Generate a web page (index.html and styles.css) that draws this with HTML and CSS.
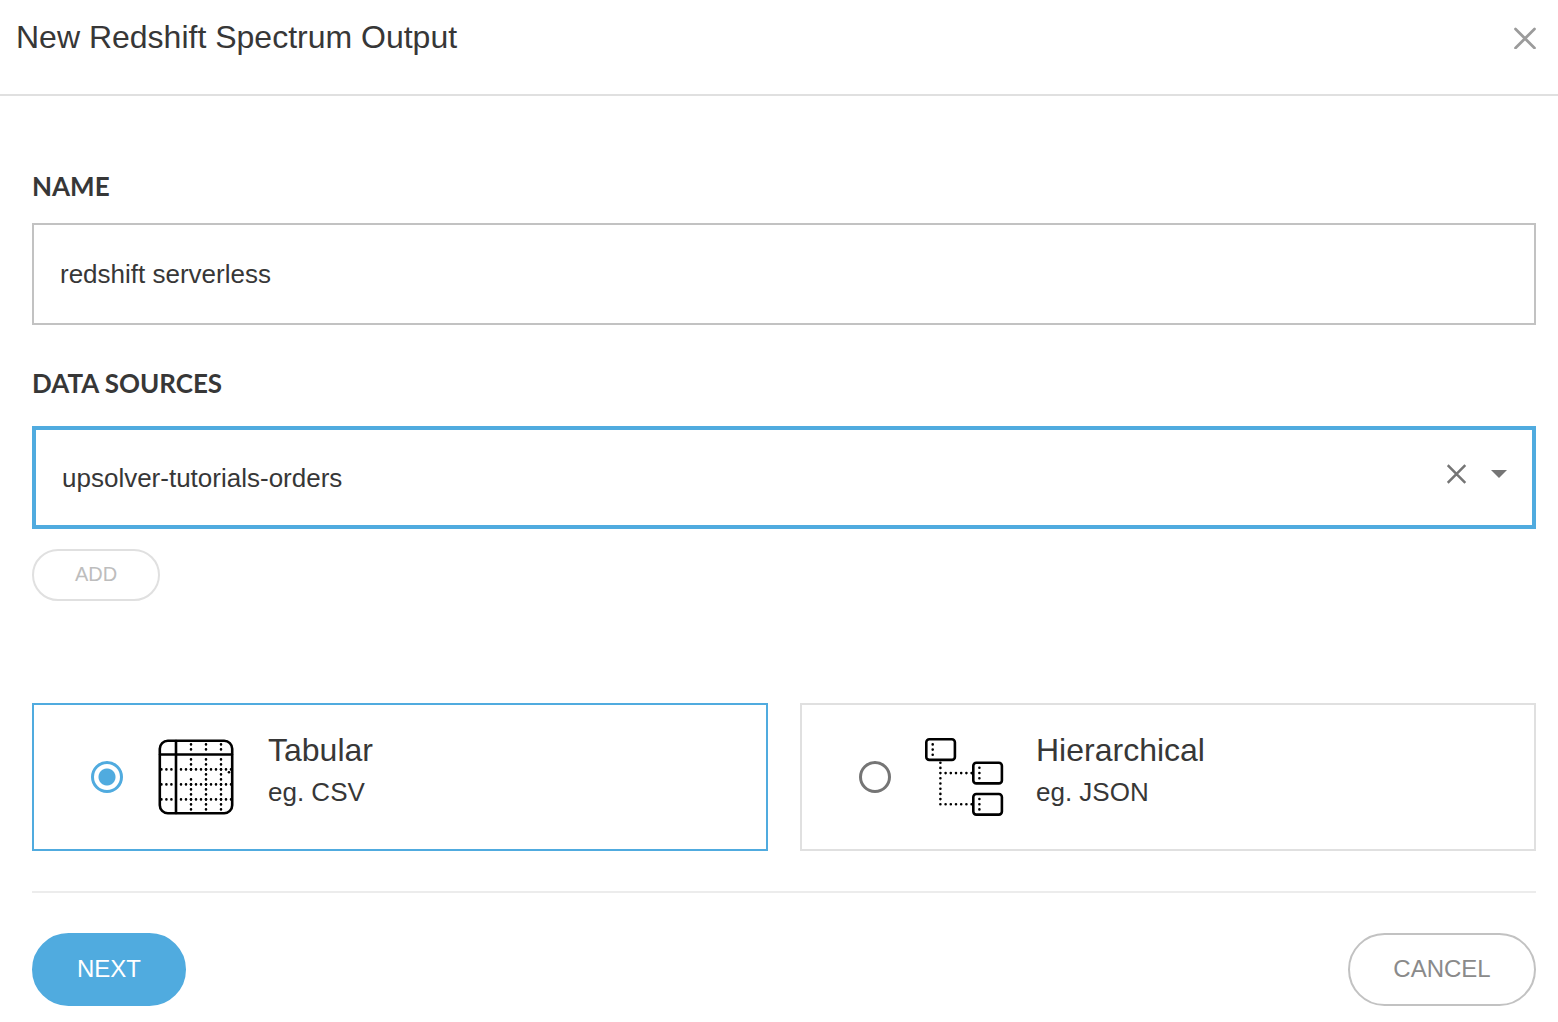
FILE: index.html
```
<!DOCTYPE html>
<html lang="en">

<head>
    <meta charset="utf-8">
    <title>New Redshift Spectrum Output</title>
    <link rel="stylesheet" href="styles.css">
</head>

<body>
    <header class="dialog-header">
        <h1>New Redshift Spectrum Output</h1>
        <button type="button" class="icon-btn" aria-label="Close">
            <svg width="22" height="24" viewBox="0 0 22 24" fill="none" stroke="#9b9b9b" stroke-width="2.7" stroke-linecap="round">
                <path d="M1.5 4l19 19M20.5 4l-19 19" />
            </svg>
        </button>
    </header>

    <form class="dialog-body">
        <label class="field-label" for="name">NAME</label>
        <input class="text-input" type="text" id="name" name="name" value="redshift serverless">

        <label class="field-label source-label" for="source">DATA SOURCES</label>
        <div class="select-box">
            <select id="source" name="source">
                <option>upsolver-tutorials-orders</option>
            </select>
            <div class="select-icons">
                <button type="button" class="icon-btn" aria-label="Clear">
                    <svg width="20" height="20" viewBox="0 0 20 20" fill="none" stroke="#757575" stroke-width="2.5">
                        <path d="M.7 1.2l17.6 17.6M18.3 1.2L.7 18.8" />
                    </svg>
                </button>
                <svg width="16" height="8" viewBox="0 0 16 8">
                    <path d="M0 0h16l-8 8z" fill="#757575" />
                </svg>
            </div>
        </div>
        <button type="button" class="btn btn-add" disabled>ADD</button>

        <div class="cards">
            <label class="card">
                <input type="radio" name="format" value="tabular" checked>
                <svg class="card-icon" width="80" height="80" viewBox="0 0 80 80" fill="none" stroke="#000" stroke-width="2.6" stroke-linecap="round">
                    <rect x="3.8" y="3.8" width="72.4" height="72.4" rx="8" />
                    <path d="M20 4v72M4 17.5h72" />
                    <!-- dotted cells -->
                    <g stroke-dasharray="0 5">
                        <path d="M35 7.4v5.1M50 7.4v5.1M65 7.4v5.1" />
                        <path d="M35 22.4v10.1M35 42.4v30.1M50 22.4v50.1M65 22.4v50.1" />
                        <path d="M5.4 32.4h10.1M5.4 47.4h10.1M5.4 62.4h10.1" />
                        <path d="M25 32.4h50.1M25 47.4h50.1M25 62.4h50.1" />
                        <path d="M73 35.2h.1" />
                    </g>
                </svg>
                <span class="card-text">
                    <span class="card-title">Tabular</span>
                    <span class="card-hint">eg. CSV</span>
                </span>
            </label>

            <label class="card">
                <input type="radio" name="format" value="hierarchical">
                <svg class="card-icon" width="80" height="80" viewBox="0 0 80 80" fill="none" stroke="#000" stroke-width="2.6" stroke-linecap="round">
                    <rect x="2.3" y="2.3" width="28.6" height="20.6" rx="3" />
                    <rect x="49.3" y="25.8" width="28.6" height="20.6" rx="3" />
                    <rect x="49.3" y="57" width="28.6" height="20.6" rx="3" />
                    <!-- connectors -->
                    <g stroke-dasharray="0 5.2">
                        <path d="M8.7 7.4v10.5M55.4 30.8v10.5M55.4 62v10.5" />
                        <path d="M16.4 25.7v41.7M16.4 36.1h31.3M16.4 67.3h31.3" />
                    </g>
                </svg>
                <span class="card-text">
                    <span class="card-title">Hierarchical</span>
                    <span class="card-hint">eg. JSON</span>
                </span>
            </label>
        </div>

        <footer class="dialog-footer">
            <button type="submit" class="btn btn-next">NEXT</button>
            <button type="button" class="btn btn-cancel">CANCEL</button>
        </footer>
    </form>
</body>

</html>
```
FILE: styles.css
```
* {
    box-sizing: border-box;
}

body {
    margin: 0;
    background: #fff;
    color: #373737;
    font-family: "Liberation Sans", Arial, sans-serif;
}

.dialog-header {
    display: flex;
    justify-content: space-between;
    align-items: center;
    height: 96px;
    padding: 0 22px 20px 16px;
    border-bottom: 2px solid #e0e0e0;
}

h1 {
    margin: 0;
    font-size: 32px;
    line-height: 40px;
    font-weight: normal;
}

.icon-btn {
    display: flex;
    padding: 0;
    border: none;
    background: none;
    cursor: pointer;
}

.dialog-body {
    padding: 72px 22px 16px 32px;
}

.field-label {
    display: block;
    margin-bottom: 19px;
    font-family: Lato, sans-serif;
    font-size: 26px;
    line-height: 36px;
    font-weight: bold;
}

.source-label {
    margin-top: 40px;
    margin-bottom: 25px;
}

.text-input,
.select-box {
    width: 100%;
    height: 102px;
    border: 2px solid #c2c2c2;
    background: #fff;
}

.text-input,
.select-box select {
    padding: 0 26px;
    color: #373737;
    font-family: inherit;
    font-size: 26px;
    outline: none;
}

.text-input {
    display: block;
}

.select-box {
    display: flex;
    height: 103px;
    border: 4px solid #50abdf;
}

.select-box select {
    flex: 1;
    padding-top: 1px;
    border: none;
    background: none;
    appearance: none;
}

.select-icons {
    display: flex;
    align-items: center;
    gap: 24px;
    padding: 0 25px 7px 0;
}

.btn {
    height: 73px;
    padding: 0 0 2px;
    border: 2px solid #c2c2c2;
    border-radius: 37px;
    background: #fff;
    font-family: inherit;
    font-size: 24px;
    cursor: pointer;
}

.btn-add {
    display: block;
    width: 128px;
    height: 52px;
    margin-top: 20px;
    border-color: #e0e0e0;
    color: #bdbdbd;
    font-size: 20px;
    cursor: default;
}

.cards {
    display: grid;
    grid-template-columns: 1fr 1fr;
    gap: 32px;
    margin-top: 102px;
}

.card {
    display: flex;
    align-items: center;
    height: 148px;
    padding-left: 57px;
    border: 2px solid #e0e0e0;
    cursor: pointer;
}

.card:has(input:checked) {
    border-color: #50abdf;
}

.card input {
    appearance: none;
    width: 32px;
    height: 32px;
    margin: 0;
    border: 3px solid #757575;
    border-radius: 50%;
}

.card input:checked {
    border-color: #50abdf;
    background: radial-gradient(circle, #50abdf 8px, #fff 9px);
}

.card-icon {
    margin: 0 32px 0 33px;
}

.card-text {
    display: flex;
    flex-direction: column;
    padding-bottom: 12px;
}

.card-title {
    font-size: 32px;
    line-height: 42px;
}

.card-hint {
    font-size: 26px;
    line-height: 42px;
}

.dialog-footer {
    display: flex;
    justify-content: space-between;
    margin-top: 40px;
    padding-top: 40px;
    border-top: 2px solid #ececec;
}

.btn-next {
    width: 154px;
    border-color: #50abdf;
    background: #50abdf;
    color: #fff;
}

.btn-cancel {
    width: 188px;
    color: #8a8a8a;
}
```
